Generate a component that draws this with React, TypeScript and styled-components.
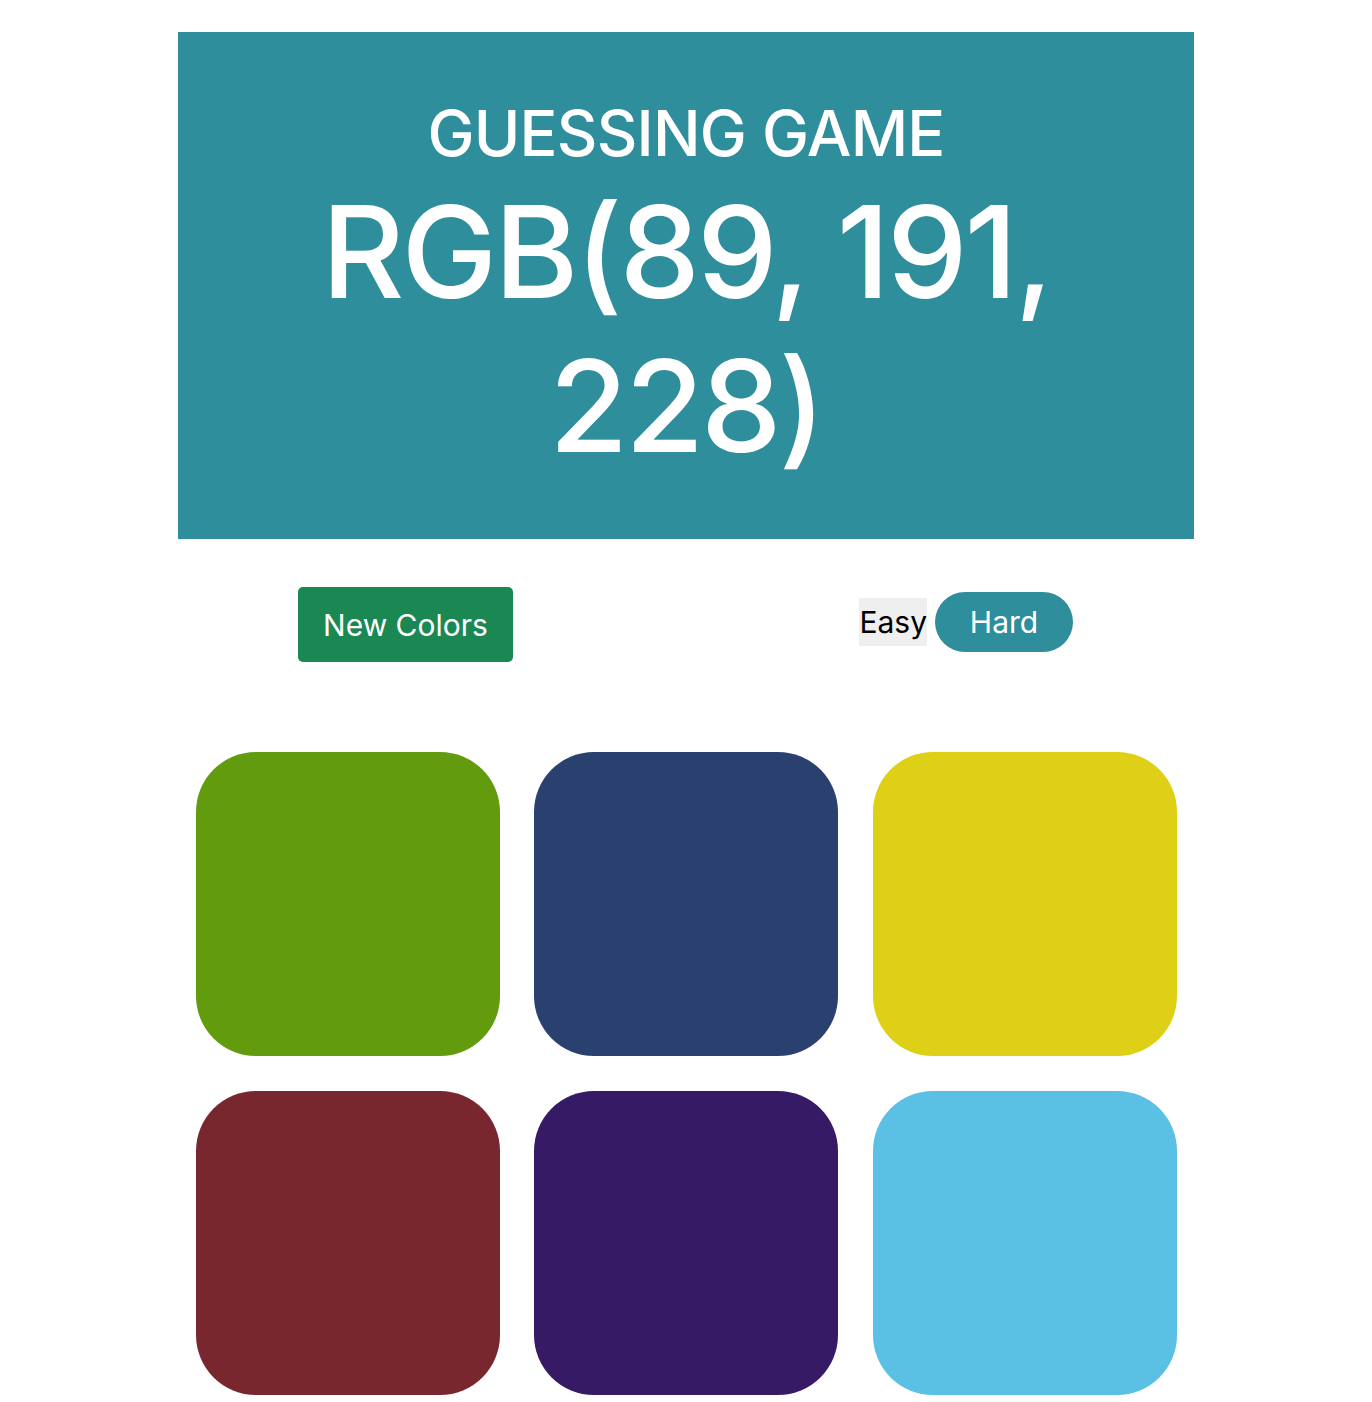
import React from "react";
import styled, { createGlobalStyle } from "styled-components";

const Global = createGlobalStyle`
  html, body { margin: 0; padding: 0; background: #ffffff; }
  body { font-family: Inter, "Noto Sans", sans-serif; }
`;

const Page = styled.div`
  width: 1016px;
  margin: 32px auto 0;
  display: flex;
  flex-direction: column;
`;

const Header = styled.header`
  background: #2e8e9b;
  color: #ffffff;
  height: 507px;
  box-sizing: border-box;
  padding-top: 61px;
  text-align: center;
`;

const Title = styled.h1`
  margin: 0 0 2px;
  font-size: 63px;
  font-weight: 500;
  line-height: 80px;
  letter-spacing: -0.8px;
`;

const Target = styled.h2`
  margin: 0;
  font-size: 128px;
  font-weight: 500;
  line-height: 154px;
  letter-spacing: -3px;
  padding: 0 120px;
`;

const Controls = styled.div`
  display: flex;
  justify-content: space-between;
  align-items: center;
  padding: 0 121px 0 120px;
  margin-top: 48px;
  height: 75px;
`;

const NewButton = styled.button`
  width: 215px;
  height: 75px;
  border: none;
  border-radius: 5px;
  background: #1b8854;
  color: #ffffff;
  font-family: Inter, "Noto Sans", sans-serif;
  font-size: 30px;
  font-weight: 400;
  cursor: pointer;
  padding: 0;
`;

const Modes = styled.div`
  display: flex;
  align-items: center;
  gap: 8px;
  margin-bottom: 5px;
`;

const ModeButton = styled.button<{ $active?: boolean }>`
  border: none;
  font-family: Inter, "Noto Sans", sans-serif;
  font-size: 30px;
  cursor: pointer;
  ${(p) =>
    p.$active
      ? `
    background: #2e8e9b;
    color: #ffffff;
    width: 138px;
    height: 60px;
    border-radius: 30px;
    padding: 0;
  `
      : `
    background: #efefef;
    color: #000000;
    height: 48px;
    padding: 0;
    border-radius: 0;
  `}
`;

const Grid = styled.div`
  display: grid;
  grid-template-columns: repeat(3, 304px);
  column-gap: 34.5px;
  row-gap: 35px;
  justify-content: center;
  margin-top: 90px;
  padding-bottom: 7px;
`;

const Square = styled.div<{ $color: string }>`
  width: 304px;
  height: 304px;
  border-radius: 60px;
  background: ${(p) => p.$color};
`;

const colors = [
  "#629b0d",
  "#2a4170",
  "#ddd016",
  "#79272f",
  "#371a66",
  "#5ac0e4",
];

export default function App() {
  return (
    <>
      <Global />
      <Page>
        <Header>
          <Title>GUESSING GAME</Title>
          <Target>RGB(89, 191, 228)</Target>
        </Header>
        <Controls>
          <NewButton>New Colors</NewButton>
          <Modes>
            <ModeButton>Easy</ModeButton>
            <ModeButton $active>Hard</ModeButton>
          </Modes>
        </Controls>
        <Grid>
          {colors.map((c, i) => (
            <Square key={i} $color={c} />
          ))}
        </Grid>
      </Page>
    </>
  );
}
